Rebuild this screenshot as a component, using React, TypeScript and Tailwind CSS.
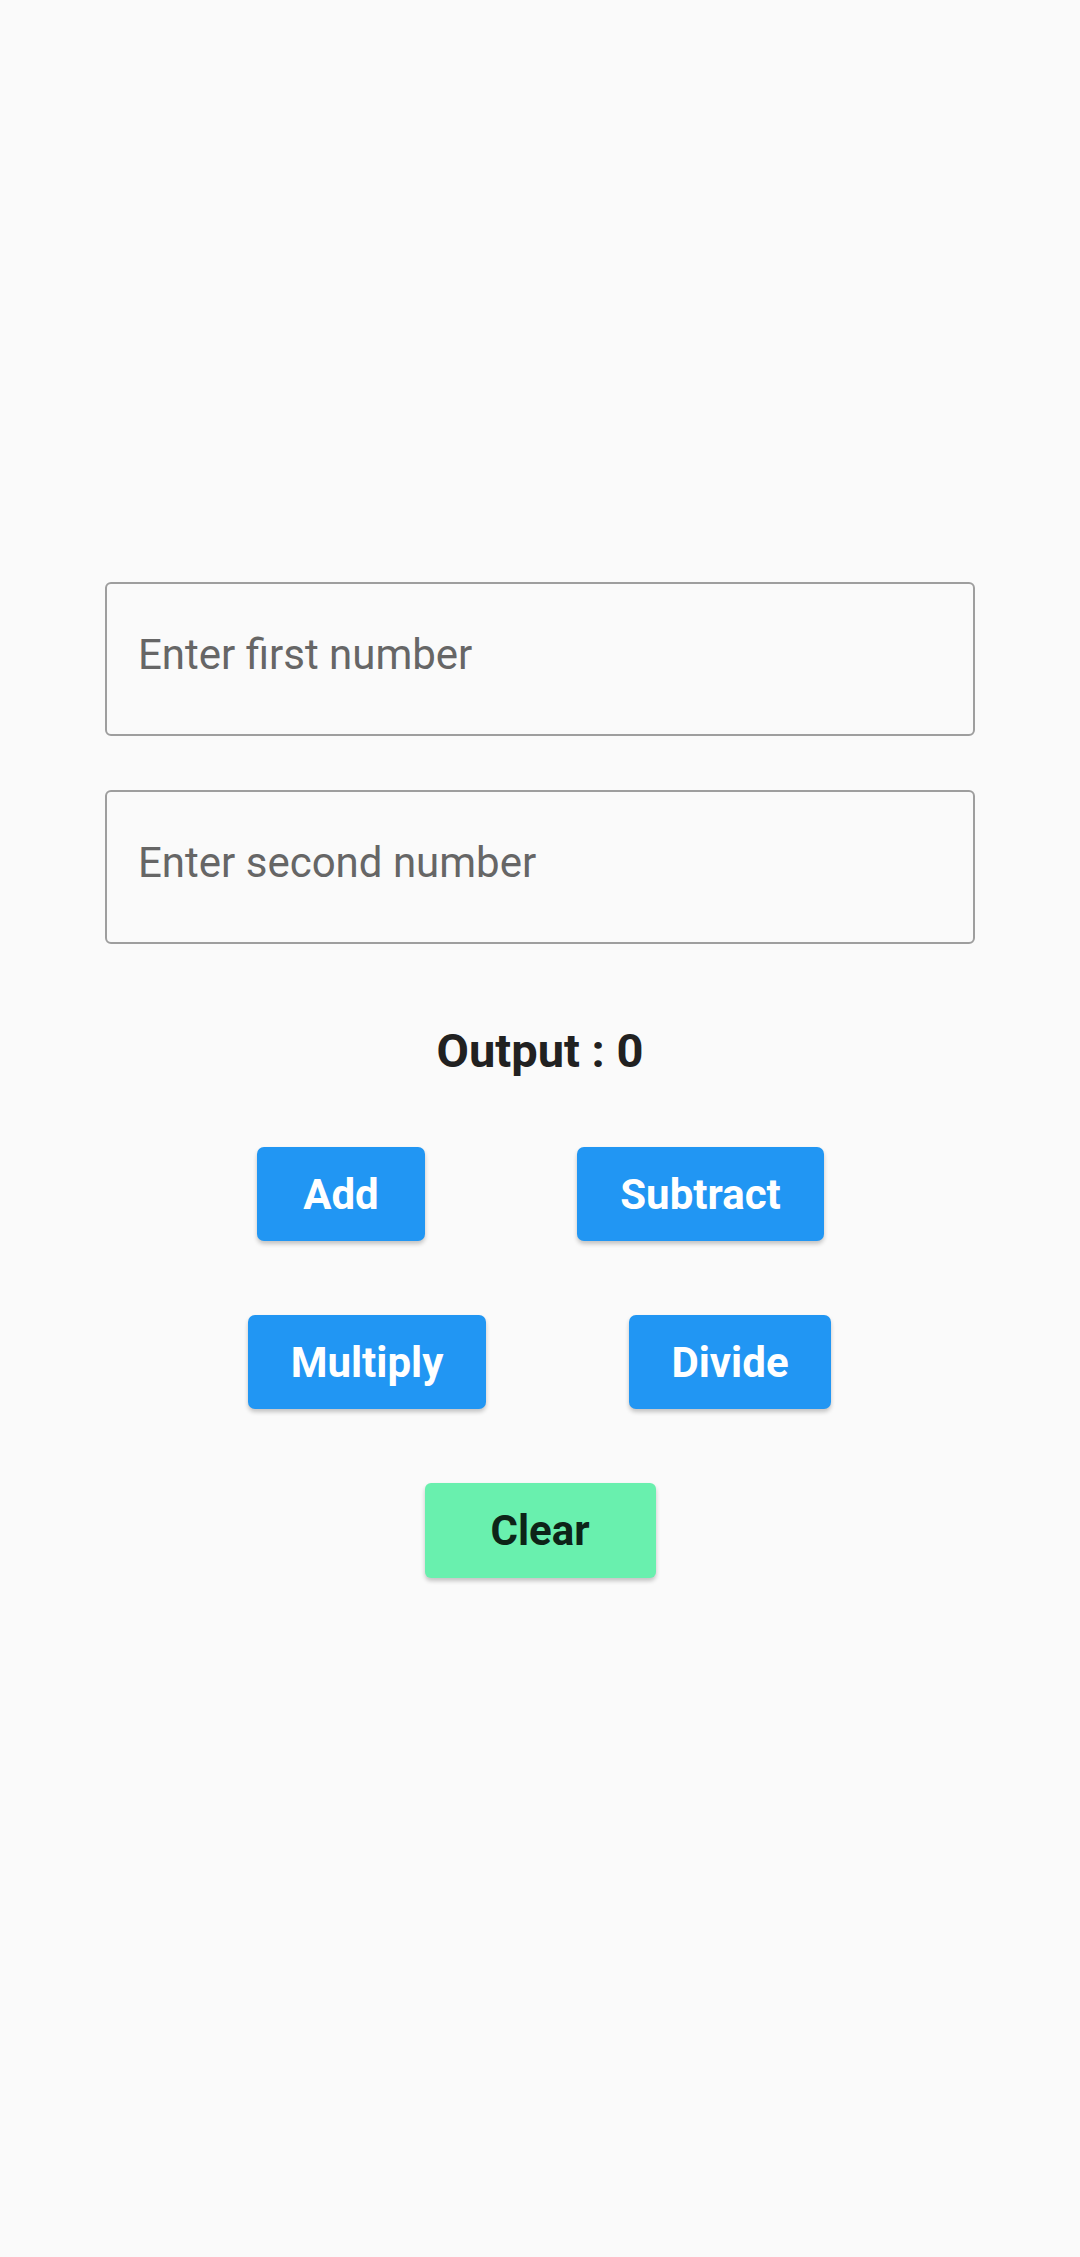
import React from 'react';

const font = { fontFamily: 'Roboto, "Noto Sans", sans-serif' };

export default function App() {
  return (
    <div className="min-h-[2257px] w-[1080px] bg-[#fafafa] flex flex-col" style={font}>
      {/* Inputs */}
      <div className="flex flex-col gap-[54px] px-[105px] pt-[582px]">
        <input
          placeholder="Enter first number"
          className="h-[154px] w-full rounded-[6px] border-2 border-[#9e9e9e] bg-transparent pl-[31px] pb-[9px] text-[42px] text-[#212121] placeholder:text-[#666666] outline-none"
        />
        <input
          placeholder="Enter second number"
          className="h-[154px] w-full rounded-[6px] border-2 border-[#9e9e9e] bg-transparent pl-[31px] pb-[9px] text-[42px] text-[#212121] placeholder:text-[#666666] outline-none"
        />
      </div>

      {/* Output */}
      <div className="mt-[83px] flex justify-center text-[47px] leading-none font-bold text-[#212121]">
        Output : 0
      </div>

      {/* Buttons */}
      <div className="mt-[73px] flex flex-col gap-[74px]">
        <div className="flex pl-[257px] gap-[152px]">
          <button className="h-[94px] w-[168px] rounded-[7px] bg-[#2196f3] text-[42px] font-bold text-white shadow-[0_3px_4px_rgba(0,0,0,0.22)]">
            Add
          </button>
          <button className="h-[94px] w-[247px] rounded-[7px] bg-[#2196f3] text-[42px] font-bold text-white shadow-[0_3px_4px_rgba(0,0,0,0.22)]">
            Subtract
          </button>
        </div>
        <div className="flex pl-[248px] gap-[143px]">
          <button className="h-[94px] w-[238px] rounded-[7px] bg-[#2196f3] text-[42px] font-bold text-white shadow-[0_3px_4px_rgba(0,0,0,0.22)]">
            Multiply
          </button>
          <button className="h-[94px] w-[202px] rounded-[7px] bg-[#2196f3] text-[42px] font-bold text-white shadow-[0_3px_4px_rgba(0,0,0,0.22)]">
            Divide
          </button>
        </div>
        <div className="flex justify-center">
          <button className="h-[95px] w-[231px] rounded-[6px] bg-[#69f0ae] text-[42px] font-bold text-[#0d2418] shadow-[0_3px_4px_rgba(0,0,0,0.22)]">
            Clear
          </button>
        </div>
      </div>
    </div>
  );
}
